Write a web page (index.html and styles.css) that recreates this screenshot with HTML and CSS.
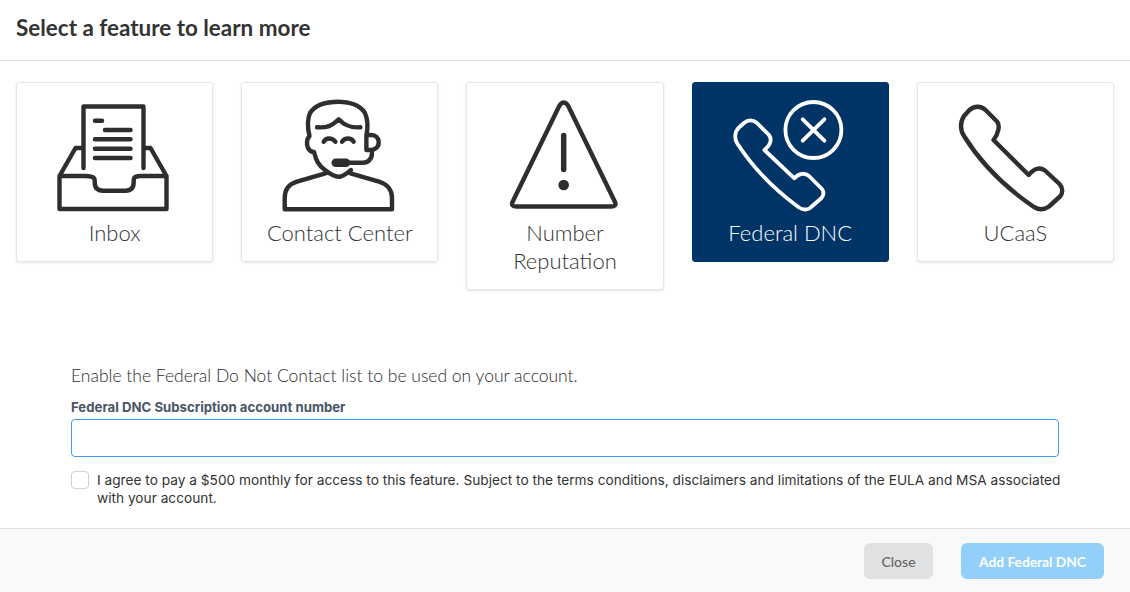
FILE: index.html
```html
<!DOCTYPE html>
<html lang="en">
<head>
<meta charset="utf-8">
<title>Select a feature</title>
<link rel="stylesheet" href="styles.css">
</head>
<body>
<div class="modal">
  <header class="head"><h1>Select a feature to learn more</h1></header>
  <section class="cards">
    <div class="card">
      <svg class="ico" viewBox="0 0 120 120"><path d="M28.500 70V8.500H88.500V70M28 50H20.500L4.500 78H30.500Q39.700 78 39.700 82V84Q39.700 92.700 48 92.700H70.500Q78.700 92.700 78.700 84V82Q78.700 78 85 78H111.500L95.500 50H89M4.500 78V111H111.500V78"/><path class="l" d="M40 22.700H47M50 32H75.500M40 41.300H75.500M40 50.700H75.500M40 60H75.500"/></svg>
      <span class="name">Inbox</span>
    </div>
    <div class="card">
      <svg class="ico" viewBox="0 0 120 120"><path d="M86.400 37C88 30 88 22 85 15 80 7 69 3.700 58.700 3.700 46 3.700 35 7 30 15 27 22 27.500 30 29.500 38 27 41 26.500 46 28 50 29.500 53 32 54 34 54 36 62 38 67 45 72 50 76 54 78.700 58.700 78.700 63 78.700 67 75 71 72M86.400 37H91C96 37 98.700 40 98.700 44.500 98.700 49 95 52 91 52H86.400V37M37 29.300C47 30 52 28 58.700 21.300 65 28 71 30 80.400 29.300M43.700 43.700C46 39.500 52 39.500 55.400 43.700M62 43.700C65 39.500 71 39.500 73.700 43.700M68 64.700H83C88 64.700 92 61 92 55M45.400 75.300 17 83.700C9 86 4.700 92 4.700 100V111.300H112V100C112 92 107 86 99 83.700L70.400 75.300"/><path class="mic" d="M55.700 64.700H66"/></svg>
      <span class="name">Contact Center</span>
    </div>
    <div class="card">
      <svg class="ico" viewBox="0 0 120 120"><path d="M54.500 7.500Q58.700 1.500 63 7.500L110 104Q112 108.500 106 108.500H11.500Q5.500 108.500 7.500 104Z"/><path class="bang" d="M58.700 37.500V71.500"/><circle class="dot" cx="58.700" cy="87" r="5.300"/></svg>
      <span class="name">Number Reputation</span>
    </div>
    <div class="card on">
      <svg class="ico" viewBox="0 0 120 120"><circle cx="83.400" cy="32" r="28"/><path d="M72.700 21.300 94.400 42.700M94.400 21.300 72.700 42.700"/><path d="M14 25 C18 21.500 23 21.500 27 25L39 37C42 41 41 47 34.400 52L64.400 80.300C69 75 75 74.500 79 78L92 91C94 94 94 97 91.500 100L80 110C77 112 73 112 69 109.500 45 92 23 70 7 45 4 40 5 33 9 29.500Z"/></svg>
      <span class="name">Federal DNC</span>
    </div>
    <div class="card">
      <svg class="ico" viewBox="0 0 120 120"><path d="M14.500 12C19 8 26 7.500 30.500 12L42 23.500C45 27 44 35 38.500 42L73.700 77C79 70 85 69 90 72.500L104.500 86C108 90 108 95 105 98.500L94 108.500C89 112 84 112 79 109 54 92 27 67 9 38 5 32 5 24 9 18Z"/></svg>
      <span class="name">UCaaS</span>
    </div>
  </section>
  <section class="form">
    <p class="lead">Enable the Federal Do Not Contact list to be used on your account.</p>
    <label class="field-label" for="acct">Federal DNC Subscription account number</label>
    <input class="field" id="acct" type="text">
    <div class="agree">
      <span class="box"></span>
      <p>I agree to pay a $500 monthly for access to this feature. Subject to the terms conditions, disclaimers and limitations of the EULA and MSA associated with your account.</p>
    </div>
  </section>
  <footer class="foot">
    <button class="btn close" type="button">Close</button>
    <button class="btn add" type="button">Add Federal DNC</button>
  </footer>
</div>
</body>
</html>
```
FILE: styles.css
```css
* { box-sizing: border-box; }
html, body { margin: 0; height: 100%; }
body { background: #fff; font-family: "Lato", sans-serif; color: #333; overflow: hidden; }
.modal { width: 1130px; height: 592px; display: flex; flex-direction: column; }
.head { height: 61px; padding: 14px 16px 0; border-bottom: 1px solid #e3e4e6; flex: none; }
.head h1 { margin: 0; font-size: 22.450px; line-height: 28px; font-weight: 700; color: #333; }
.cards { display: flex; align-items: flex-start; gap: 28px; padding: 21px 16px 0; flex: none; }
.card { flex: 1 1 0; min-width: 0; display: flex; flex-direction: column; align-items: center; padding: 15px 23px 14px; background: #fff; border: 1px solid #e6e6e6; border-radius: 3px; box-shadow: 0 1px 3px rgba(0,0,0,.1); color: #333; }
.card.on { background: #003366; border-color: #003366; color: #fff; box-shadow: none; }
.ico { width: 120px; height: 120px; display: block; flex: none; fill: none; stroke: currentColor; stroke-width: 4.400; stroke-linejoin: round; stroke-linecap: round; color: #2e2e2e; }
.card.on .ico { color: #fff; stroke-width: 3.800; }
.ico .l { stroke-width: 4.500; }
.ico .mic { stroke-width: 8.500; }
.ico .bang { stroke-width: 5.500; }
.ico .dot { fill: currentColor; stroke: none; }
.name { display: block; margin-top: 1px; font-size: 22px; line-height: 28px; font-weight: 300; text-align: center; }
.form { padding: 0 71px; margin-top: 74px; flex: 1; }
.lead { margin: 0; font-size: 17.500px; line-height: 24px; font-weight: 300; color: #2b2b2b; }
.field-label { display: block; margin-top: 11px; font-family: "Inter", sans-serif; font-size: 13.200px; line-height: 16px; font-weight: 700; color: #4a5568; }
.field { display: block; width: 100%; height: 38px; margin-top: 4px; padding: 0 10px; background: #fff; border: 1px solid #3d9bf3; border-radius: 4px; outline: 0; }
.agree { display: flex; gap: 8px; margin-top: 14px; }
.box { flex: none; width: 18px; height: 18px; border: 1px solid #cfd2d6; border-radius: 4px; background: #fff; }
.agree p { margin: 0 -6px 0 0; font-family: "Inter", sans-serif; font-size: 13.700px; line-height: 18px; color: #333; }
.foot { flex: none; height: 64px; padding: 14px 26px 0 0; display: flex; justify-content: flex-end; align-items: flex-start; gap: 28px; background: #f8f9fb; border-top: 1px solid #dfe0e2; }
.btn { height: 36px; border: 0; border-radius: 6px; font-family: "Lato", sans-serif; font-size: 14px; font-weight: 500; padding: 0 17px; }
.close { width: 69px; background: #e0e1e3; color: #666; }
.add { width: 143px; background: #93d0f9; color: #fff; font-weight: 700; font-size: 13.750px; }
```
